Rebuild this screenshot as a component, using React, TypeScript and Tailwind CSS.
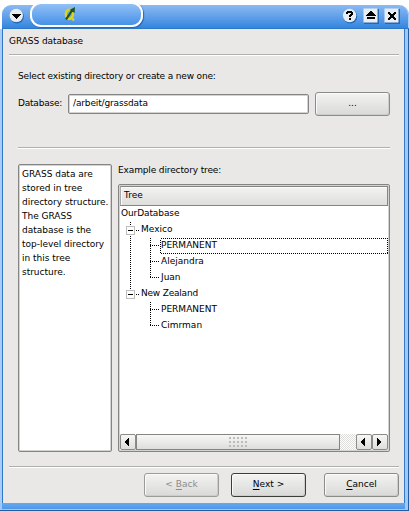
import type { ReactNode } from "react";

function Rule({ className = "" }: { className?: string }) {
  return <div className={`h-[2px] shrink-0 border-t border-b border-t-[#b0b0ae] border-b-white ${className}`} />;
}

function PushButton({ children, tone = "normal" }: { children: ReactNode; tone?: "normal" | "default" | "disabled" }) {
  const tones = {
    normal: "border-[#8b8b89] text-black",
    default: "border-[#3c3c3a] text-black",
    disabled: "border-[#9b9b99] text-[#8c8c8a]",
  };
  return (
    <button
      className={`flex h-6 w-[75px] shrink-0 items-center justify-center rounded-[3px] border bg-linear-to-b from-[#f3f3f2] to-[#d9d9d7] pb-[2px] shadow-[inset_1px_1px_0_#fafafa,inset_-1px_-1px_0_#cdcdcb] ${tones[tone]}`}
    >
      <span className="whitespace-pre">{children}</span>
    </button>
  );
}

function Key({ children }: { children: string }) {
  return <span className="underline decoration-1 underline-offset-[2px]">{children}</span>;
}

function ScrollButton({ dir }: { dir: "left" | "right" }) {
  return (
    <div className="flex h-4 w-4 shrink-0 items-center justify-center rounded-[2px] border border-[#8b8b89] bg-linear-to-b from-[#f7f7f6] to-[#dededc] pr-[2px]">
      <svg width="4" height="8" shapeRendering="crispEdges" aria-hidden="true">
        <path d={dir === "left" ? "M4 0v8h-1v-1h-1v-1h-1v-1h-1v-2h1v-1h1v-1h1v-1z" : "M0 0v8h1v-1h1v-1h1v-1h1v-2h-1v-1h-1v-1h-1v-1z"} />
      </svg>
    </div>
  );
}

function Group({ name, last = false }: { name: string; last?: boolean }) {
  return (
    <div className="flex h-4">
      <svg width="21" height="16" className="shrink-0" shapeRendering="crispEdges" aria-hidden="true">
        <path d={last ? "M10.5 0v4" : "M10.5 0v4M10.5 14v2"} stroke="#000" strokeDasharray="1 1" />
        <rect x="6.5" y="4.5" width="8" height="8" fill="#fff" stroke="#bdbdbb" />
        <path d="M8 8.5h5" stroke="#000" />
        <path d="M16 8.5h4" stroke="#000" strokeDasharray="1 1" />
      </svg>
      <span className={last ? "-mt-px tracking-[-0.2px]" : "-mt-px"}>{name}</span>
    </div>
  );
}

function Leaf({ name, last = false, trunk = false, focused = false }: { name: string; last?: boolean; trunk?: boolean; focused?: boolean }) {
  return (
    <div className="flex h-4">
      <svg width="40" height="16" className="shrink-0" shapeRendering="crispEdges" aria-hidden="true">
        {trunk && <path d="M10.5 0v16" stroke="#000" strokeDasharray="1 1" />}
        <path d={last ? "M30.5 0v8" : "M30.5 0v16"} stroke="#000" strokeDasharray="1 1" />
        <path d="M30 7.5h9" stroke="#000" strokeDasharray="1 1" />
      </svg>
      <div className="relative -mt-px grow">
        {focused && (
          <svg width="228" height="16" className="absolute left-0 top-px" shapeRendering="crispEdges" aria-hidden="true">
            <rect x="0.5" y="0.5" width="227" height="15" fill="none" stroke="#000" strokeDasharray="1 1" />
          </svg>
        )}
        <span className="relative left-px">{name}</span>
      </div>
    </div>
  );
}

function TitleBar() {
  return (
    <header className="relative h-[29px] w-full shrink-0 bg-white pt-[5px]">
      <div className="ml-[2px] flex h-6 justify-between rounded-tl-[9px] rounded-tr-[10px] border-b border-[#2e78c8] bg-linear-to-b from-[#8bbaf2] to-[#3285df] pl-[7px] pr-[9px] pt-[3px] shadow-[inset_-1px_0_0_#a9cdf7]">
        <svg width="15" height="16" aria-hidden="true">
          <circle cx="8" cy="8.6" r="6.9" fill="#2468b5" />
          <circle cx="7.3" cy="7.4" r="6.7" fill="#e8edf3" />
          <path d="M3 6h9v1h-1v1h-1v1H9v1H8v1H7v-1H6V9H5V8H4V7H3z" shapeRendering="crispEdges" />
        </svg>
        <svg width="58" height="17" aria-hidden="true">
          <circle cx="8.3" cy="8.5" r="6.9" fill="#2468b5" />
          <circle cx="7.6" cy="7.5" r="6.7" fill="#e8edf3" />
          <path d="M5 3h5v1h1v3h-1v1H9v1H7V7h1V6h1V5H6v1H4V4h1zM7 10h2v2H7z" shapeRendering="crispEdges" />
          <rect x="22" y="1" width="15" height="15" fill="#2468b5" />
          <rect x="21.5" y="0.5" width="14" height="14" fill="#e8edf3" />
          <path d="M28 3h2v1h1v1h1v1h1v1h1v1H24V7h1V6h1V5h1V4h1zM25 9h8v2h-8z" shapeRendering="crispEdges" />
          <rect x="43" y="1" width="15" height="15" fill="#2468b5" />
          <rect x="42.5" y="0.5" width="14" height="14" fill="#e8edf3" />
          <path d="M46 4h2v1h1v1h2V5h1V4h2v2h-1v1h-1v2h1v1h1v2h-2v-1h-1v-1h-2v1h-1v1h-2v-2h1V9h1V7h-1V6h-1z" shapeRendering="crispEdges" />
        </svg>
      </div>
      <div className="absolute left-[30px] top-[2px] flex h-[25px] w-[113px] justify-center rounded-[11px] border-2 border-white bg-linear-to-b from-[#91c0f6] to-[#4591e7] pr-[34px] pt-[2px] shadow-[1px_1px_1px_#2468b5]">
        <svg width="12" height="16" aria-hidden="true">
          <ellipse cx="5.4" cy="8.3" rx="3.6" ry="4.7" fill="none" stroke="#ddd51c" strokeWidth="2.3" />
          <path d="M6.5 10.500l3.500 4" stroke="#ddd51c" strokeWidth="2.3" />
          <path d="M2 13.500L8 4.500" stroke="#1a5227" strokeWidth="2.2" />
          <path d="M5.500 4L11 1l-.5 6z" fill="#1a5227" />
        </svg>
      </div>
    </header>
  );
}

const note = ["GRASS data are", "stored in tree", "directory structure.", "The GRASS", "database is the", "top-level directory", "in this tree", "structure."];

export default function App() {
  return (
    <div className="flex h-[511px] w-[409px] flex-col overflow-hidden bg-white font-['DejaVu_Sans',sans-serif] text-[9px] leading-[14px] text-black">
      <TitleBar />
      <div className="flex h-[474px] shrink-0 border-l-2 border-r border-l-[#a9cdf7] border-r-[#235d9f] bg-[#a0c8f5] pr-[3px]">
        <main className="flex grow flex-col border-x border-[#3277c5] bg-[#e9e8e6]">
          <h1 className="mt-[5px] h-5 shrink-0 pl-[6px] tracking-[-0.07px]">GRASS database</h1>
          <Rule className="ml-[6px] mr-[5px]" />
          <section className="flex h-[400px] shrink-0 flex-col pl-[15px] pr-[14px]">
            <p className="mt-[13px] h-[23px] shrink-0 tracking-[-0.16px]">Select existing directory or create a new one:</p>
            <div className="flex h-6 shrink-0 items-center">
              <label htmlFor="database" className="w-[50px] pb-[2px] tracking-[-0.2px]">Database:</label>
              <input
                id="database"
                defaultValue="/arbeit/grassdata"
                className="h-5 w-[241px] rounded-[2px] border border-[#858583] bg-white pb-[2px] pl-1 tracking-[-0.14px] shadow-[inset_0_0_0_1px_#d3d3d1] outline-none"
              />
              <div className="ml-[6px] flex"><PushButton>...</PushButton></div>
            </div>
            <Rule className="mt-[31px]" />
            <div className="mt-[15px] flex h-[288px] shrink-0 gap-[6px]">
              <aside className="w-[94px] shrink-0 rounded-[2px] border border-[#858583] bg-white pl-[3px] pt-[2px] tracking-[-0.02px] shadow-[inset_0_0_0_1px_#d3d3d1]">
                {note.map((line) => <p key={line} className="whitespace-nowrap">{line}</p>)}
              </aside>
              <div className="flex w-[272px] shrink-0 flex-col">
                <p className="-mt-px h-[21px] tracking-[-0.13px]">Example directory tree:</p>
                <div className="flex h-[268px] flex-col rounded-[2px] border border-[#858583] bg-white p-px shadow-[inset_0_0_0_1px_#d3d3d1]">
                  <div className="h-5 w-[268px] shrink-0 border border-[#858583] border-l-[#aaa] bg-linear-to-b from-[#f3f3f2] to-[#dededc] pl-[3px] pt-px shadow-[inset_1px_1px_0_#fafafa]">Tree</div>
                  <div className="grow leading-4">
                    <p className="-mt-px mb-px h-4 pl-px tracking-[-0.1px]">OurDatabase</p>
                    <Group name="Mexico" />
                    <Leaf name="PERMANENT" trunk focused />
                    <Leaf name="Alejandra" trunk />
                    <Leaf name="Juan" trunk last />
                    <Group name="New Zealand" last />
                    <Leaf name="PERMANENT" />
                    <Leaf name="Cimrman" last />
                  </div>
                  <div className="flex h-4 w-[268px] shrink-0 bg-[repeating-conic-gradient(#fff_0_25%,#dededc_0_50%)] bg-[length:2px_2px]">
                    <ScrollButton dir="left" />
                    <div className="flex w-[204px] items-center justify-center border border-[#858583] bg-linear-to-b from-[#f7f7f6] to-[#dededc]">
                      <svg width="18" height="10" shapeRendering="crispEdges" aria-hidden="true">
                        {[0, 4, 8].map((y) => <path key={y} d={`M0 ${y + 1}h18`} stroke="#bcbcba" strokeWidth="2" strokeDasharray="2 2" />)}
                      </svg>
                    </div>
                    <div className="w-4" />
                    <ScrollButton dir="left" />
                    <ScrollButton dir="right" />
                  </div>
                </div>
              </div>
            </div>
          </section>
          <Rule className="ml-[6px] mr-[5px] mt-[10px]" />
          <footer className="mt-[5px] flex justify-end pr-[5px]">
            <PushButton tone="disabled">{"< "}<Key>B</Key>ack</PushButton>
            <div className="ml-3 mr-[18px]"><PushButton tone="default"><Key>N</Key>{"ext >"}</PushButton></div>
            <PushButton><Key>C</Key>ancel</PushButton>
          </footer>
        </main>
      </div>
      <div className="h-2 shrink-0 border-b border-r border-b-[#235d9f] border-r-[#235d9f] bg-[#a0c8f5] pb-px pl-[2px] pr-[3px]">
        <div className="h-full bg-linear-to-b from-[#67a8ee] to-[#4d98ec]" />
      </div>
    </div>
  );
}
